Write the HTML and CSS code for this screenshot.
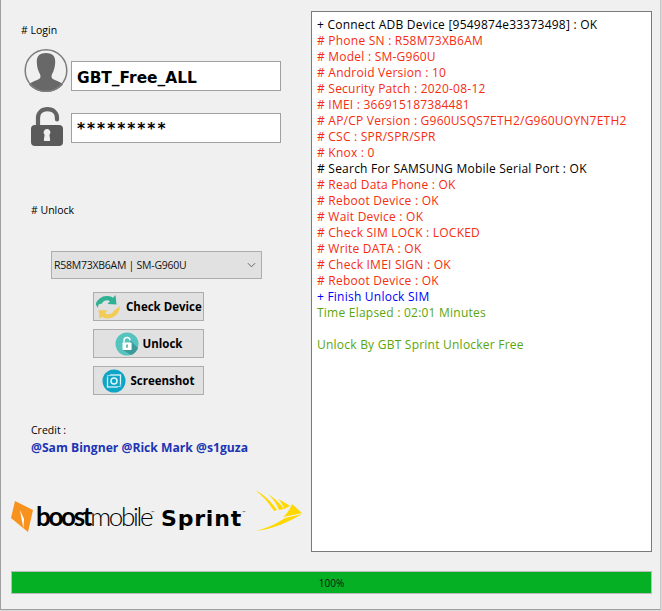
FILE: index.html
```html
<!DOCTYPE html>
<html lang="en">
<head>
<meta charset="utf-8">
<title>GBT Sprint Unlocker</title>
<link rel="stylesheet" href="styles.css">
</head>
<body>
<div class="window">
  <div class="main">
    <section class="left">
      <div class="section-label login-label"># Login</div>
      <div class="login-row user-row">
        <svg class="avatar" viewBox="0 0 44 45" aria-hidden="true">
          <path d="M22 5c-6 0-9.200 2.800-9.200 8.500 0 3.500.6 6.500 1.700 9.500.8 2.200 2 3.500 2 5.500 0 1.800-1.500 2.800-4 3.800-2.500 1-5.500 2-7.500 4.200C8.600 41 15 44 22 44s13.400-3 17-7.500c-2-2.200-5-3.200-7.500-4.200-2.500-1-4-2-4-3.800 0-2 1.200-3.300 2-5.500 1.100-3 1.700-6 1.700-9.500C31.200 7.800 28 5 22 5z" fill="#686868"/>
          <circle cx="22" cy="22.500" r="20.800" fill="none" stroke="#7d7d7d" stroke-width="1.500"/>
        </svg>
        <div class="field user-field">GBT_Free_ALL</div>
      </div>
      <div class="login-row pass-row">
        <svg class="lock" viewBox="0 0 34 40" aria-hidden="true">
          <path d="M8 19v-8C8 5.500 12 2.200 17.500 2.200S27 5.500 27 11v1.500" fill="none" stroke="#636363" stroke-width="4.200" stroke-linecap="round"/>
          <rect x="1" y="18" width="32" height="21" rx="4" fill="#5a5a5a"/>
          <path d="M17 22a3.500 3.500 0 0 1 2.400 6l.8 5a1 1 0 0 1-1 1h-4.400a1 1 0 0 1-1-1l.8-5a3.500 3.500 0 0 1 2.400-6z" fill="#efefef"/>
        </svg>
        <div class="field pass-field">*********</div>
      </div>

      <div class="section-label unlock-label"># Unlock</div>
      <div class="select">
        <span>R58M73XB6AM | SM-G960U</span>
        <svg class="chevron" viewBox="0 0 10 6" aria-hidden="true"><path d="M1 1l4 4 4-4" fill="none" stroke="#555" stroke-width="1"/></svg>
      </div>
      <div class="buttons">
        <button class="btn check-btn" type="button">
          <svg class="btn-icon sync" viewBox="0 0 26 26" aria-hidden="true">
            <path d="M1 11C2 5 7 1.500 13 2c2 .1 3.500.8 5 1.800L20.500 1l1 9.500-9-.5 2.500-2.800c-3-1.700-6.500-.8-8 2.300z" fill="#2fb293"/>
            <path d="M3 6c-1.500 1.800-2 3.500-2 5l2 3c0-3 1-5 3-6z" fill="#2fb293"/>
            <path d="M25 12c0 7-6 12.500-12.500 12.500-2.200 0-4-.6-5.500-1.700L4.500 25 3.500 16l9 .5-2.500 2.800c3.200 1.800 7 1 8.500-2.300z" fill="#f2cc57"/>
          </svg>
          <span>Check Device</span>
        </button>
        <button class="btn unlock-btn" type="button">
          <svg class="btn-icon" viewBox="0 0 24 24" aria-hidden="true">
            <circle cx="12" cy="12" r="11.500" fill="#55c4bf"/>
            <path d="M8 18h8.500V11l-1.500-1.500V8l8 8a11.500 11.500 0 0 1-7 7z" fill="#3d9b99"/>
            <path d="M9 10.500V8.500a3 3 0 0 1 6 0" fill="none" stroke="#fff" stroke-width="1.400"/>
            <rect x="7.500" y="10.500" width="9" height="7.500" rx=".8" fill="#fff"/>
            <rect x="11.300" y="12.500" width="1.400" height="3.200" fill="#3d9b99"/>
          </svg>
          <span>Unlock</span>
        </button>
        <button class="btn shot-btn" type="button">
          <svg class="btn-icon" viewBox="0 0 24 24" aria-hidden="true">
            <circle cx="12" cy="12" r="11.500" fill="#0ea5c6"/>
            <rect x="5.500" y="6" width="13" height="12" fill="none" stroke="#dff5fa" stroke-width="1.300"/>
            <circle cx="12" cy="12" r="3" fill="none" stroke="#dff5fa" stroke-width="1.500"/>
            <path d="M5 8.500V5.500h3M19 15.500v3h-3" fill="none" stroke="#0ea5c6" stroke-width="1"/>
          </svg>
          <span>Screenshot</span>
        </button>
      </div>

      <div class="credit-label">Credit :</div>
      <div class="credit-names">@Sam Bingner @Rick Mark @s1guza</div>

      <div class="logos">
        <svg class="boost-mark" viewBox="0 0 22 31" aria-hidden="true">
          <path d="M4 0l18 9-5 22L0 17z" fill="#f7921e"/>
          <path d="M9 9l4 9-.5 9-2-9z" fill="#fff"/>
        </svg>
        <div class="boost-word"><b>boost</b><span>mobile</span><sup>™</sup></div>
        <div class="sprint-word">Sprint<sup>™</sup></div>
        <svg class="sprint-mark" viewBox="0 0 47 42" aria-hidden="true">
          <path d="M0 0C8 4 16 11 22 20l-3 1C14 13 8 6 0 0z" fill="#ffd800"/>
          <path d="M13 4c6 4 12 9 16 15l-5 1C22 14 18 9 13 4z" fill="#ffd800"/>
          <path d="M23 9c4 2 8 4 12 7l-6 3c-1-4-3-7-6-10z" fill="#ffd800"/>
          <path d="M37 14l10 9c-6 1-12 3-19 4 4-3 7-8 9-13z" fill="#ffd800"/>
          <path d="M47 24C34 32 18 39 1 41c11-3 20-7 29-13 6-1 11-3 17-4z" fill="#ffd800"/>
        </svg>
      </div>
    </section>

    <section class="log">
      <div class="line black">+ Connect ADB Device [9549874e33373498] : OK</div>
      <div class="line red"># Phone SN : R58M73XB6AM</div>
      <div class="line red"># Model : SM-G960U</div>
      <div class="line red"># Android Version : 10</div>
      <div class="line red"># Security Patch : 2020-08-12</div>
      <div class="line red"># IMEI : 366915187384481</div>
      <div class="line red"># AP/CP Version : G960USQS7ETH2/G960UOYN7ETH2</div>
      <div class="line red"># CSC : SPR/SPR/SPR</div>
      <div class="line red"># Knox : 0</div>
      <div class="line black"># Search For SAMSUNG Mobile Serial Port : OK</div>
      <div class="line red"># Read Data Phone : OK</div>
      <div class="line red"># Reboot Device : OK</div>
      <div class="line red"># Wait Device : OK</div>
      <div class="line red"># Check SIM LOCK : LOCKED</div>
      <div class="line red"># Write DATA : OK</div>
      <div class="line red"># Check IMEI SIGN : OK</div>
      <div class="line red"># Reboot Device : OK</div>
      <div class="line blue">+ Finish Unlock SIM</div>
      <div class="line green">Time Elapsed : 02:01 Minutes</div>
      <div class="line green">&nbsp;</div>
      <div class="line green">Unlock By GBT Sprint Unlocker Free</div>
    </section>
  </div>

  <div class="progress"><span>100%</span></div>
</div>
</body>
</html>
```

FILE: styles.css
```css
* { box-sizing: border-box; }
html, body { margin: 0; padding: 0; background: #d9d9d9; }
body {
  width: 662px;
  height: 611px;
  overflow: hidden;
  font-family: "Open Sans", sans-serif;
  color: #000;
}
.window {
  width: 661px;
  height: 610px;
  background: #f0f0f0;
  border-left: 1px solid #a0a0a0;
  border-bottom: 1px solid #a0a0a0;
  border-right: 1px solid #c8c8c8;
  padding: 11px 8px 0 10px;
  display: flex;
  flex-direction: column;
  gap: 19px;
}
.main { display: flex; height: 541px; }
.left { width: 300px; flex: none; font-size: 10.500px; }
.section-label { font-size: 10.500px; line-height: 14px; }
.login-label { margin: 12px 0 0 10px; }
.login-row { display: flex; align-items: flex-start; }
.user-row { margin: 11px 0 0 13px; }
.avatar { width: 44px; height: 45px; flex: none; margin-right: 3px; }
.field {
  width: 210px;
  height: 30px;
  background: #fff;
  border: 1px solid #a0a0a0;
  font-family: "DejaVu Sans", sans-serif;
  font-weight: 700;
  font-size: 15.400px;
  padding-left: 5px;
  margin-top: 13px;
  line-height: 32px;
}
.pass-row { margin: 13px 0 0 19px; }
.lock { width: 34px; height: 40px; flex: none; margin: 1px 7px 0 0; }
.pass-field { margin-top: 7px; line-height: 31px; letter-spacing: 2px; }
.unlock-label { margin: 56px 0 0 20px; }
.select {
  width: 211px;
  height: 28px;
  margin: 34px 0 0 40px;
  background: #e1e1e1;
  border: 1px solid #adadad;
  display: flex;
  align-items: center;
  justify-content: space-between;
  padding: 0 5px 0 2px;
  font-size: 10.500px;
  letter-spacing: -.25px;
  color: #111;
}
.chevron { width: 9px; height: 6px; }
.buttons {
  display: flex;
  flex-direction: column;
  gap: 8px;
  margin: 13px 0 0 82px;
  width: 111px;
}
.btn {
  height: 29px;
  background: #e1e1e1;
  border: 1px solid #adadad;
  font: 700 11.500px "Open Sans", sans-serif;
  color: #000;
  display: flex;
  align-items: center;
  justify-content: center;
  padding: 0;
  white-space: nowrap;
}
.btn-icon { width: 24px; height: 24px; flex: none; margin-right: 4px; }
.sync { width: 26px; height: 26px; margin-right: 5px; }
.check-btn { justify-content: flex-start; padding-left: 1px; }
.credit-label { margin: 28px 0 0 20px; line-height: 14px; font-size: 10.500px; }
.credit-names {
  margin: 4px 0 0 20px;
  font-size: 12.150px;
  font-weight: 700;
  color: #1c34b4;
  line-height: 14px;
}
.logos {
  display: flex;
  align-items: center;
  height: 42px;
  margin: 35px 0 0 0;
}
.boost-mark { width: 22px; height: 31px; flex: none; margin: 11px 3px 0 0; }
.boost-word {
  font-family: Lato, sans-serif;
  font-size: 26px;
  letter-spacing: -2.300px;
  margin-top: 9px;
  white-space: nowrap;
  width: 125px;
}
.boost-word b { font-weight: 700; }
.boost-word span { font-weight: 300; }
.boost-word sup, .sprint-word sup { font-size: 4px; vertical-align: 12px; letter-spacing: 0; font-weight: 400; }
.sprint-word {
  font-family: "DejaVu Sans", sans-serif;
  font-weight: 700;
  font-size: 22px;
  letter-spacing: .8px;
  margin: 15px 0 0 0;
  width: 94px;
  white-space: nowrap;
}
.sprint-mark { width: 47px; height: 42px; flex: none; }
.log {
  width: 341px;
  height: 541px;
  background: #fff;
  border: 1px solid #7a7a7a;
  padding: 5px 0 0 5px;
  font-family: "Open Sans", sans-serif;
  font-size: 12px;
  letter-spacing: .23px;
}
.line { height: 16px; line-height: 16px; white-space: nowrap; }
.black { color: #000; }
.red { color: #f52d0e; }
.blue { color: #0000ff; }
.green { color: #5aa60a; }
.progress {
  width: 641px;
  height: 23px;
  background: #06b025;
  border: 1px solid #bcbcbc;
  display: flex;
  align-items: center;
  justify-content: center;
  font-size: 10px;
  color: #111;
}
```
